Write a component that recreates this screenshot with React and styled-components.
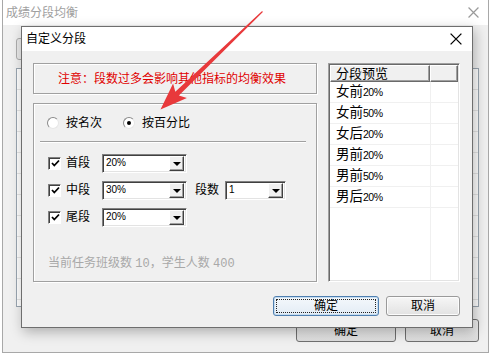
import React from "react";
import styled, { createGlobalStyle } from "styled-components";

const previews = [
	["女前", "20%"],
	["女前", "50%"],
	["女后", "20%"],
	["男前", "20%"],
	["男前", "50%"],
	["男后", "20%"],
];

const segments = [
	{ label: "首段", value: "20%" },
	{ label: "中段", value: "30%", extra: { label: "段数", value: "1" } },
	{ label: "尾段", value: "20%" },
];

const CloseIcon = ({ color, size }) => (
	<svg width={size} height={size} viewBox='0 0 10 10'>
		<path d='M0.5 0.5 L9.5 9.5 M9.5 0.5 L0.5 9.5' stroke={color} strokeWidth='1.1' fill='none' />
	</svg>
);

const CheckMark = () => (
	<svg width='9' height='9' viewBox='0 0 9 9'>
		<path d='M1 4 L3.3 6.5 L8 1.5' stroke='#000' strokeWidth='1.8' fill='none' />
	</svg>
);

const App = () => {
	return (
		<>
			<GlobalStyle />
			<Desktop>
				<BgWindow>
					<BgTitleBar>
						<BgTitle>成绩分段均衡</BgTitle>
						<CloseIcon color='#9a9a9a' size={11} />
					</BgTitleBar>
					<BgBody>
						<BgTab />
						<BgList />
						<BgFooter>
							<BgButton w={100}>确定</BgButton>
							<BgButton w={74}>取消</BgButton>
						</BgFooter>
					</BgBody>
				</BgWindow>

				<Dialog>
					<TitleBar>
						<Title>自定义分段</Title>
						<CloseIcon color='#000' size={12} />
					</TitleBar>
					<DialogBody>
						<MainRow>
							<LeftCol>
								<Notice>注意：段数过多会影响其他指标的均衡效果</Notice>
								<Group>
									<RadioRow>
										<RadioItem>
											<RadioCircle />
											<span>按名次</span>
										</RadioItem>
										<RadioItem>
											<RadioCircle checked />
											<span>按百分比</span>
										</RadioItem>
									</RadioRow>
									<Separator />
									<OptRows>
										{segments.map((s) => (
											<OptRow key={s.label}>
												<CheckBox>
													<CheckMark />
												</CheckBox>
												<OptLabel>{s.label}</OptLabel>
												<Combo w={85}>
													<ComboText>{s.value}</ComboText>
													<ComboArrow />
												</Combo>
												{s.extra ? (
													<>
														<ExtraLabel>{s.extra.label}</ExtraLabel>
														<Combo w={61}>
															<ComboText>{s.extra.value}</ComboText>
															<ComboArrow />
														</Combo>
													</>
												) : null}
											</OptRow>
										))}
									</OptRows>
									<Info>
										当前任务班级数 <Mono>10</Mono>，学生人数 <Mono>400</Mono>
									</Info>
								</Group>
							</LeftCol>
							<Preview>
								<ListHeader>
									<HeaderCell w={100}>分段预览</HeaderCell>
									<HeaderCell />
								</ListHeader>
								<ListBody>
									{previews.map(([cn, num], i) => (
										<ListRow key={i}>
											{cn}
											<Num>{num}</Num>
										</ListRow>
									))}
								</ListBody>
							</Preview>
						</MainRow>
						<Footer>
							<Button primary w={106}>
								<FocusRing>确定</FocusRing>
							</Button>
							<Button w={74}>取消</Button>
						</Footer>
					</DialogBody>
				</Dialog>

				<Arrow width='492' height='356' viewBox='0 0 492 356'>
					<polygon
						points='160.5,109.5 186.9,98 178.9,95.4 262.9,11.9 262.1,11.1 175.3,91.7 173.1,83.6'
						fill='#e8393b'
					/>
				</Arrow>
			</Desktop>
		</>
	);
};

export default App;

const GlobalStyle = createGlobalStyle`
	html, body {
		margin: 0;
		padding: 0;
		background: #fff;
	}
	body {
		font-family: "Liberation Sans", "Noto Sans CJK SC", sans-serif;
		font-size: 12px;
		color: #000;
	}
`;

const Desktop = styled.div`
	width: 492px;
	height: 356px;
	position: relative;
	overflow: hidden;
	background: #fff;
`;

const BgWindow = styled.div`
	width: 487px;
	height: 353px;
	margin-left: 2px;
	box-sizing: border-box;
	border: 1px solid #a8a8a8;
	border-top: none;
	background: #f0f0f0;
	display: flex;
	flex-direction: column;
`;

const BgTitleBar = styled.div`
	height: 25px;
	background: #fff;
	display: flex;
	align-items: center;
	justify-content: space-between;
	padding: 0 9px 0 3px;
	flex-shrink: 0;
`;

const BgTitle = styled.div`
	color: #a0a0a0;
	font-size: 12px;
	line-height: 14px;
`;

const BgBody = styled.div`
	flex: 1;
	display: flex;
	flex-direction: column;
	padding: 13px 9px 0 13px;
`;

const BgTab = styled.div`
	width: 80px;
	height: 22px;
	box-sizing: border-box;
	border: 1px solid #adadad;
	border-radius: 3px;
	background: #e9e9e9;
`;

const BgList = styled.div`
	margin-top: 8px;
	height: 239px;
	box-sizing: border-box;
	border: 1px solid #9aa5b0;
	background: repeating-linear-gradient(
			to bottom,
			#fff 0px,
			#fff 20px,
			#e6e6e6 20px,
			#e6e6e6 21px
		);
`;

const BgFooter = styled.div`
	margin-top: 12px;
	display: flex;
	justify-content: flex-end;
	gap: 9px;
`;

const BgButton = styled.div`
	width: ${(p) => p.w}px;
	height: 23px;
	box-sizing: border-box;
	border: 1px solid #707070;
	border-radius: 3px;
	background: linear-gradient(#f2f2f2, #dddddd);
	display: flex;
	align-items: center;
	justify-content: center;
	line-height: 14px;
`;

const Dialog = styled.div`
	position: absolute;
	left: 21px;
	top: 26px;
	width: 452px;
	height: 302px;
	box-sizing: border-box;
	border: 1px solid #6e6e6e;
	background: #f0f0f0;
	box-shadow: 2px 4px 12px rgba(0, 0, 0, 0.28);
	display: flex;
	flex-direction: column;
`;

const TitleBar = styled.div`
	height: 24px;
	background: #fff;
	display: flex;
	align-items: center;
	justify-content: space-between;
	padding: 0 10px 0 4px;
	flex-shrink: 0;
`;

const Title = styled.div`
	font-size: 12px;
	line-height: 14px;
`;

const DialogBody = styled.div`
	flex: 1;
	display: flex;
	flex-direction: column;
	padding: 12px 12px 11px 11px;
`;

const MainRow = styled.div`
	display: flex;
	gap: 11px;
`;

const LeftCol = styled.div`
	width: 284px;
	display: flex;
	flex-direction: column;
	gap: 9px;
`;

const etched = `
	border: 1px solid #a0a0a0;
	box-shadow: 1px 1px 0 #fff, inset 1px 1px 0 #fff;
`;

const Notice = styled.div`
	height: 31px;
	box-sizing: border-box;
	${etched}
	display: flex;
	align-items: center;
	padding-left: 24px;
	color: #e00000;
	line-height: 14px;
`;

const Group = styled.div`
	height: 179px;
	box-sizing: border-box;
	${etched}
	display: flex;
	flex-direction: column;
	padding: 0 13px 10px 13px;
`;

const RadioRow = styled.div`
	margin-top: 12px;
	height: 14px;
	display: flex;
	align-items: center;
	gap: 21px;
`;

const RadioItem = styled.label`
	display: flex;
	align-items: center;
	gap: 7px;
	line-height: 14px;
`;

const RadioCircle = styled.span`
	width: 12px;
	height: 12px;
	box-sizing: border-box;
	border-radius: 50%;
	border: 1px solid;
	border-color: #8a8a8a #e6e6e6 #e6e6e6 #8a8a8a;
	background: #fff;
	display: flex;
	align-items: center;
	justify-content: center;

	&::after {
		content: "";
		width: 4px;
		height: 4px;
		border-radius: 50%;
		background: ${(p) => (p.checked ? "#000" : "transparent")};
	}
`;

const Separator = styled.div`
	margin: 11px -3px 0 -7px;
	border-top: 1px solid #a0a0a0;
	border-bottom: 1px solid #fff;
`;

const OptRows = styled.div`
	margin-top: 10px;
	display: flex;
	flex-direction: column;
	gap: 7px;
`;

const OptRow = styled.div`
	height: 20px;
	display: flex;
	align-items: center;
`;

const CheckBox = styled.span`
	margin-left: 1px;
	width: 13px;
	height: 13px;
	box-sizing: border-box;
	border: 1px solid;
	border-color: #808080 #fff #fff #808080;
	box-shadow: inset 1px 1px 0 #404040;
	background: #fff;
	display: flex;
	align-items: center;
	justify-content: center;
	padding: 1px 0 0 1px;
`;

const OptLabel = styled.span`
	margin-left: 5px;
	width: 36px;
	font-size: 12px;
	line-height: 14px;
`;

const ExtraLabel = styled(OptLabel)`
	margin-left: 8px;
	width: 30px;
`;

const Combo = styled.div`
	width: ${(p) => p.w}px;
	height: 19px;
	box-sizing: border-box;
	border: 1px solid;
	border-color: #808080 #fff #fff #808080;
	box-shadow: inset 1px 1px 0 #404040, inset -1px -1px 0 #e3e3e3;
	background: #fff;
	display: flex;
	align-items: center;
	padding: 2px 2px 2px 3px;
`;

const ComboText = styled.span`
	flex: 1;
	font-family: "Liberation Sans", sans-serif;
	font-size: 10px;
	line-height: 12px;
`;

const ComboArrow = styled.span`
	width: 15px;
	height: 15px;
	box-sizing: border-box;
	background: #f0f0f0;
	border: 1px solid;
	border-color: #fff #404040 #404040 #fff;
	box-shadow: inset -1px -1px 0 #a0a0a0;
	display: flex;
	align-items: center;
	justify-content: center;

	&::after {
		content: "";
		border-left: 4px solid transparent;
		border-right: 4px solid transparent;
		border-top: 4px solid #000;
		margin-top: 1px;
	}
`;

const Info = styled.div`
	margin-top: auto;
	padding-left: 1px;
	color: #a8a8a8;
	line-height: 14px;
`;

const Mono = styled.span`
	font-family: "Liberation Mono", monospace;
	font-size: 12px;
`;

const Preview = styled.div`
	flex: 1;
	height: 219px;
	box-sizing: border-box;
	border: 1px solid;
	border-color: #a0a0a0 #fff #fff #a0a0a0;
	box-shadow: inset 1px 1px 0 #696969, inset -1px -1px 0 #e3e3e3;
	background: #fff;
	padding: 1px;
	display: flex;
	flex-direction: column;
`;

const ListHeader = styled.div`
	height: 17px;
	display: flex;
	flex-shrink: 0;
`;

const HeaderCell = styled.div`
	${(p) => (p.w ? `width: ${p.w}px;` : "flex: 1;")}
	box-sizing: border-box;
	background: #f0f0f0;
	border: 1px solid;
	border-color: #fff #6a6a6a #6a6a6a #fff;
	box-shadow: inset -1px -1px 0 #a0a0a0;
	padding-left: 5px;
	font-size: 13px;
	line-height: 15px;
	overflow: hidden;
`;

const ListBody = styled.div`
	flex: 1;
	background: linear-gradient(
			to right,
			transparent 100px,
			#f0f0f0 100px,
			#f0f0f0 101px,
			transparent 101px
		),
		#fff;
`;

const ListRow = styled.div`
	height: 21px;
	box-sizing: border-box;
	border-bottom: 1px solid #f0f0f0;
	padding-left: 6px;
	font-size: 13.5px;
	line-height: 20px;
	white-space: nowrap;
`;

const Num = styled.span`
	font-family: "Liberation Sans", sans-serif;
	font-size: 10.5px;
	letter-spacing: -0.5px;
`;

const Footer = styled.div`
	margin-top: 14px;
	display: flex;
	justify-content: flex-end;
	gap: 7px;
`;

const Button = styled.div`
	width: ${(p) => p.w}px;
	height: 20px;
	box-sizing: border-box;
	border: 1px solid ${(p) => (p.primary ? "#4f7fb0" : "#9a9a9a")};
	border-radius: 3px;
	background: ${(p) =>
		p.primary
			? "linear-gradient(#f4f8fc, #e3ecf5)"
			: "linear-gradient(#f6f6f6, #e2e2e2)"};
	box-shadow: inset 0 0 0 1px ${(p) => (p.primary ? "#c5dcf0" : "#fcfcfc")};
	display: flex;
	align-items: center;
	justify-content: center;
	padding: 2px;
	line-height: 14px;
`;

const FocusRing = styled.span`
	flex: 1;
	align-self: stretch;
	border: 1px dotted #222;
	display: flex;
	align-items: center;
	justify-content: center;
`;

const Arrow = styled.svg`
	position: absolute;
	left: 0;
	top: 0;
	pointer-events: none;
`;
